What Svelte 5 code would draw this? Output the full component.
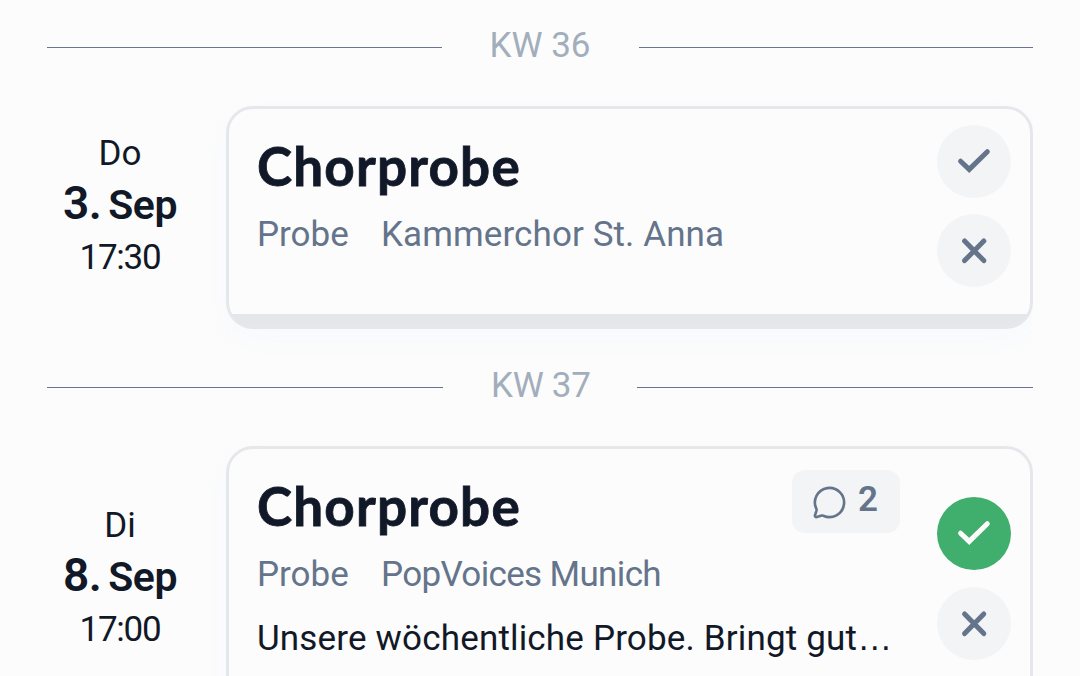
<script>
  let weeks = $state([
    {
      number: 36,
      size: 'short',
      events: [
        {
          weekday: 'Do', day: 3, month: 'Sep', time: '17:30',
          title: 'Chorprobe', type: 'Probe', group: 'Kammerchor St. Anna',
          status: null, comments: 0, excerpt: ''
        }
      ]
    },
    {
      number: 37,
      size: 'tall',
      events: [
        {
          weekday: 'Di', day: 8, month: 'Sep', time: '17:00',
          title: 'Chorprobe', type: 'Probe', group: 'PopVoices Munich',
          status: 'yes', comments: 2,
          excerpt: 'Unsere wöchentliche Probe. Bringt gut'
        }
      ]
    }
  ]);

  function answer(event, status) {
    event.status = event.status === status ? null : status;
  }
</script>

<main class="agenda">
  {#each weeks as week}
    <section class="week {week.size}">
      <div class="divider"><span class="kw">KW {week.number}</span></div>
      {#each week.events as event}
        <div class="row">
          <div class="date">
            <span class="weekday">{event.weekday}</span>
            <strong class="day"><span class="num">{event.day}.</span><span class="month">{event.month}</span></strong>
            <span class="time">{event.time}</span>
          </div>
          <article class="card">
            <div class="body">
              <div class="head">
                <h2>{event.title}</h2>
                {#if event.comments}
                  <span class="badge">
                    <svg viewBox="0 0 24 24" width="35" height="35">
                      <path d="M2.992 16.342a2 2 0 0 1 .094 1.167l-1.065 3.29a1 1 0 0 0 1.236 1.168l3.413-.998a2 2 0 0 1 1.099.092 10 10 0 1 0-4.777-4.719" />
                    </svg>
                    <span>{event.comments}</span>
                  </span>
                {/if}
              </div>
              <p class="meta"><span class="type">{event.type}</span><span class="group">{event.group}</span></p>
              {#if event.excerpt}
                <p class="description">{event.excerpt}<span class="more">…</span></p>
              {/if}
            </div>
            <div class="actions">
              <button class:yes={event.status === 'yes'} aria-label="Zusagen" onclick={() => answer(event, 'yes')}>
                <svg viewBox="0 0 74 74" width="74" height="74"><path d="M23.6 36.2 32.2 44.4 50.3 26.7" /></svg>
              </button>
              <button class:no={event.status === 'no'} aria-label="Absagen" onclick={() => answer(event, 'no')}>
                <svg viewBox="0 0 74 74" width="74" height="74"><path d="M27.6 27 46.8 46.6M46.8 27 27.6 46.6" /></svg>
              </button>
            </div>
          </article>
        </div>
      {/each}
    </section>
  {/each}
</main>

<style>
  :global(body) {
    background: #fcfcfc;
  }
  .agenda {
    box-sizing: border-box;
    width: 1080px;
    height: 676px;
    padding: 0 47px;
    overflow: hidden;
    font-family: Roboto, sans-serif;
    font-size: 35px;
    line-height: 52px;
    color: #111827;
  }
  .week {
    height: 340px;
  }
  .divider {
    display: flex;
    align-items: center;
    height: 95px;
    margin-bottom: 11px;
    color: #a2aebb;
  }
  .divider::before,
  .divider::after {
    content: '';
    flex: 1;
    height: 1px;
    background: #6b7394;
  }
  .kw {
    width: 103px;
    margin: -4px 47px 0;
    text-align: center;
    white-space: nowrap;
  }
  .tall .kw {
    width: 100px;
    letter-spacing: -0.3px;
    text-indent: 1px;
  }
  .row {
    display: flex;
    height: 223px;
    clip-path: inset(-40px 0 -40px -40px);
  }
  .tall .row {
    height: 287px;
  }
  .date {
    display: flex;
    flex-direction: column;
    justify-content: center;
    align-items: center;
    width: 146px;
    margin-right: 33px;
    padding-bottom: 24px;
    white-space: nowrap;
  }
  .day {
    display: flex;
    align-items: baseline;
    gap: 7px;
    margin: -3px 0 1px;
    font-weight: 600;
  }
  .num {
    font-size: 46px;
    letter-spacing: -0.5px;
  }
  .month {
    font-size: 41px;
    letter-spacing: -0.5px;
  }
  .time {
    letter-spacing: -1.2px;
  }
  .card {
    box-sizing: border-box;
    flex: 1;
    min-width: 0;
    display: flex;
    padding: 0 19px 11px 28px;
    border: 3px solid #e6e7eb;
    border-radius: 27px;
    background: linear-gradient(#e5e6ea, #e5e6ea) bottom / 100% 12px no-repeat #fcfcfc;
    box-shadow: 0 10px 24px rgba(246, 249, 254, 0.8);
  }
  .body {
    flex: 1;
    min-width: 0;
    padding-top: 22px;
  }
  .head {
    display: flex;
    justify-content: space-between;
    height: 78px;
  }
  h2 {
    margin: 5px 0 0;
    font-family: Lato, sans-serif;
    font-size: 53px;
    font-weight: 700;
    line-height: 60px;
    letter-spacing: 1.2px;
    -webkit-text-stroke: 0.8px;
  }
  .badge {
    box-sizing: border-box;
    display: flex;
    gap: 11px;
    width: 108px;
    height: 63px;
    margin: -1px 37px 0 0;
    padding-left: 20px;
    border-radius: 13px;
    background: #f3f4f6;
    color: #64748b;
    font-weight: 600;
    line-height: 59px;
  }
  .badge svg {
    margin-top: 15px;
  }
  svg {
    display: block;
    fill: none;
    stroke: currentColor;
    stroke-linecap: round;
    stroke-linejoin: round;
    stroke-width: 1.8;
  }
  p {
    margin: 0;
    white-space: nowrap;
  }
  .meta {
    display: flex;
    color: #64748b;
  }
  .type {
    width: 124px;
  }
  .group {
    letter-spacing: 0.1px;
  }
  .tall .group {
    letter-spacing: -0.65px;
  }
  .description {
    margin-top: 11px;
    letter-spacing: 0.17px;
  }
  .more {
    font-family: 'Liberation Sans', sans-serif;
  }
  .actions {
    display: flex;
    flex-direction: column;
    justify-content: center;
    gap: 16px;
    padding-bottom: 12px;
  }
  .tall .actions {
    gap: 17px;
  }
  button {
    width: 74px;
    height: 73px;
    padding: 0;
    border: 0;
    border-radius: 50%;
    background: #f3f4f6;
    color: #64748b;
    cursor: pointer;
  }
  button svg {
    stroke-width: 5;
    stroke-linejoin: miter;
  }
  button.yes {
    background: #40ae6c;
    color: #fcfcfc;
  }
  button.no {
    background: #dc4c4c;
    color: #fcfcfc;
  }
</style>
